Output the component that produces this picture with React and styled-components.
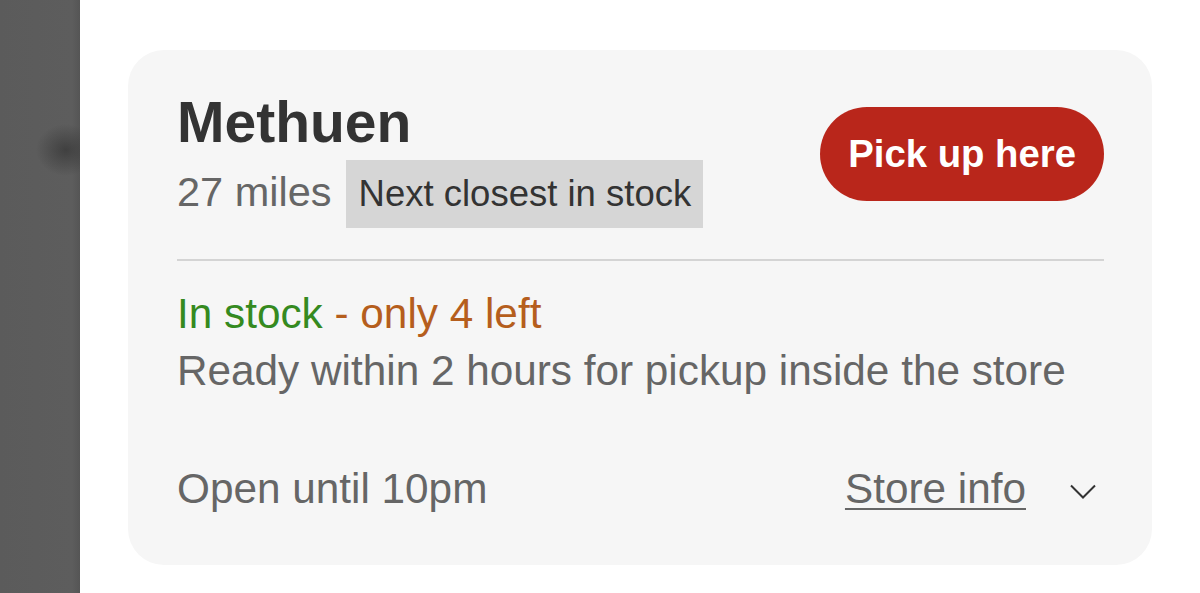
import React from 'react';
import styled, { createGlobalStyle } from 'styled-components';

const Global = createGlobalStyle`
  html, body {
    margin: 0;
    padding: 0;
    background: #fff;
  }
  body {
    font-family: "Liberation Sans", Arial, sans-serif;
  }
`;

const Page = styled.div`
  display: flex;
  width: 1200px;
  height: 593px;
  overflow: hidden;
`;

const Rail = styled.div`
  width: 80px;
  flex-shrink: 0;
  background:
    radial-gradient(ellipse 30px 26px at 66px 150px, rgba(40, 40, 40, 0.55), rgba(40, 40, 40, 0) 100%),
    linear-gradient(to right, #5b5b5b 0%, #5d5d5d 90%, #555 100%);
`;

const Main = styled.main`
  flex: 1;
  padding: 50px 48px 0 48px;
`;

const Card = styled.section`
  box-sizing: border-box;
  width: 1024px;
  height: 515px;
  background: #f6f6f6;
  border-radius: 36px;
  padding: 44px 48px 0 49px;
  display: flex;
  flex-direction: column;
`;

const Header = styled.div`
  display: flex;
  justify-content: space-between;
  align-items: flex-start;
`;

const Title = styled.h2`
  margin: 0;
  font-size: 57px;
  line-height: 56px;
  font-weight: 700;
  color: #333;
`;

const Meta = styled.div`
  display: flex;
  align-items: baseline;
  gap: 14px;
  margin-top: 10px;
`;

const Distance = styled.span`
  font-size: 41.5px;
  color: #666;
`;

const Badge = styled.span`
  background: #d6d6d6;
  color: #333;
  font-size: 36.5px;
  line-height: 40px;
  padding: 14px 12px 14px 13px;
`;

const PickButton = styled.button`
  margin-top: 13px;
  height: 94px;
  padding: 0 28px;
  border: none;
  border-radius: 47px;
  background: #b9261b;
  color: #fff;
  font-family: inherit;
  font-size: 38.3px;
  font-weight: 700;
  cursor: pointer;
`;

const Divider = styled.hr`
  margin: 31px 0 0;
  border: none;
  height: 2px;
  background: #d4d4d4;
`;

const Line = styled.p`
  margin: 0;
  font-size: 42.3px;
  line-height: 57px;
  color: ${({ tone }) => tone || '#666'};
`;

const Availability = styled(Line)`
  margin-top: 24px;
`;

const Footer = styled.div`
  display: flex;
  align-items: center;
  margin-top: 61px;
`;

const Hours = styled(Line)`
  flex: 1;
`;

const InfoLink = styled.a`
  font-size: 42.3px;
  line-height: 57px;
  color: #666;
  text-decoration: underline;
  text-decoration-thickness: 2px;
  text-underline-offset: 5px;
  cursor: pointer;
`;

const Chevron = styled.svg`
  margin: 5px 8px 0 44px;
  display: block;
`;

export default function App() {
  return (
    <>
      <Global />
      <Page>
        <Rail />
        <Main>
          <Card>
            <Header>
              <div>
                <Title>Methuen</Title>
                <Meta>
                  <Distance>27 miles</Distance>
                  <Badge>Next closest in stock</Badge>
                </Meta>
              </div>
              <PickButton>Pick up here</PickButton>
            </Header>
            <Divider />
            <Availability tone="#358a1f">
              In stock <span style={{ color: '#b55e1d' }}>- only 4 left</span>
            </Availability>
            <Line>Ready within 2 hours for pickup inside the store</Line>
            <Footer>
              <Hours>Open until 10pm</Hours>
              <InfoLink>Store info</InfoLink>
              <Chevron width="26" height="15" viewBox="0 0 26 15">
                <path d="M1 1.5 L13 13.5 L25 1.5" fill="none" stroke="#333" strokeWidth="2" />
              </Chevron>
            </Footer>
          </Card>
        </Main>
      </Page>
    </>
  );
}
